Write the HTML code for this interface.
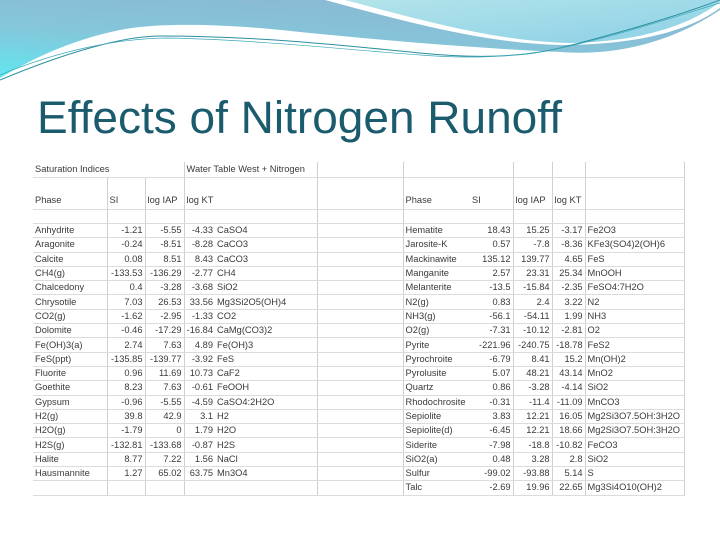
<!DOCTYPE html>
<html><head><meta charset="utf-8"><style>
html,body{margin:0;padding:0;background:#fff;}
body{width:720px;height:540px;position:relative;overflow:hidden;font-family:"Liberation Sans",sans-serif;}
table{position:absolute;left:33px;top:162px;border-collapse:collapse;table-layout:fixed;width:651px;font-size:9.3px;color:#3a3a3a;}
td{padding:0 2px;white-space:nowrap;overflow:hidden;border-bottom:1px solid #dcdcdc;height:13.3px;line-height:13px;}
td.r{text-align:right;}
td.b{border-right:1px solid #d0d0d0;}
tr.h1 td{height:15px;}
tr.h2 td{height:29px;vertical-align:bottom;padding-bottom:2px;}
tr.h3 td{height:13px;}
</style></head><body>
<svg width="720" height="160" style="position:absolute;left:0;top:0">
<defs>
<linearGradient id="g1" x1="0" y1="1" x2="0.6" y2="0"><stop offset="0" stop-color="#62e6f0"/><stop offset="0.5" stop-color="#85c6da"/><stop offset="1" stop-color="#8ab9d2"/></linearGradient>
<linearGradient id="g2" x1="0" y1="0" x2="1" y2="1"><stop offset="0" stop-color="#b3e4ea"/><stop offset="1" stop-color="#8cd0e6"/></linearGradient>
</defs>
<rect width="720" height="160" fill="#fff"/>
<path d="M0,0 H720 V10 C660,50 600,55 560,52 C470,48 380,40 300,32 C230,24 160,22 120,30 C70,40 30,60 0,78 Z" fill="url(#g1)"/>
<path d="M325,0 H720 V8 C690,30 640,45 560,45 C480,43 400,20 325,0 Z" fill="#fff"/>
<path d="M345,0 H720 V2 C690,25 640,42 570,43 C500,42 420,20 345,0 Z" fill="url(#g2)"/>
<path d="M0,80 C60,55 120,36 160,36 C260,36 350,46 420,53 C470,58 520,58 560,48 C620,33 680,15 720,0" fill="none" stroke="#2d8fa0" stroke-width="1"/>
<path d="M0,75 C60,50 120,38 170,38 C260,40 350,50 420,55 C470,59 520,58 570,46 C630,32 690,12 720,3" fill="none" stroke="#3aa8b8" stroke-width="0.7"/>
<text x="37" y="133" font-family="Liberation Sans, sans-serif" font-size="45" fill="#1a5b6e" textLength="525" lengthAdjust="spacingAndGlyphs">Effects of Nitrogen Runoff</text>
</svg>
<table>
<colgroup><col style="width:74px"><col style="width:38px"><col style="width:39px"><col style="width:31px"><col style="width:102px"><col style="width:86px"><col style="width:67px"><col style="width:43px"><col style="width:39px"><col style="width:33px"><col style="width:99px"></colgroup>
<tr class="h1"><td colspan="3" style="border-right:1px solid #d0d0d0">Saturation Indices</td><td colspan="2" class="b">Water Table West + Nitrogen</td><td class="b"></td><td></td><td class="b"></td><td class="b"></td><td class="b"></td><td class="b"></td></tr>
<tr class="h2"><td class="b">Phase</td><td class="b">SI</td><td class="b">log IAP</td><td>log KT</td><td class="b"></td><td class="b"></td><td>Phase</td><td class="b">SI</td><td class="b">log IAP</td><td class="b">log KT</td><td class="b"></td></tr>
<tr class="h3"><td class="b"></td><td class="b"></td><td class="b"></td><td></td><td class="b"></td><td class="b"></td><td></td><td class="b"></td><td class="b"></td><td class="b"></td><td class="b"></td></tr>
<tr><td class="b">Anhydrite</td><td class="r b">-1.21</td><td class="r b">-5.55</td><td class="r">-4.33</td><td class="b">CaSO4</td><td class="b"></td><td>Hematite</td><td class="r b">18.43</td><td class="r b">15.25</td><td class="r b">-3.17</td><td class="b">Fe2O3</td></tr>
<tr><td class="b">Aragonite</td><td class="r b">-0.24</td><td class="r b">-8.51</td><td class="r">-8.28</td><td class="b">CaCO3</td><td class="b"></td><td>Jarosite-K</td><td class="r b">0.57</td><td class="r b">-7.8</td><td class="r b">-8.36</td><td class="b">KFe3(SO4)2(OH)6</td></tr>
<tr><td class="b">Calcite</td><td class="r b">0.08</td><td class="r b">8.51</td><td class="r">8.43</td><td class="b">CaCO3</td><td class="b"></td><td>Mackinawite</td><td class="r b">135.12</td><td class="r b">139.77</td><td class="r b">4.65</td><td class="b">FeS</td></tr>
<tr><td class="b">CH4(g)</td><td class="r b">-133.53</td><td class="r b">-136.29</td><td class="r">-2.77</td><td class="b">CH4</td><td class="b"></td><td>Manganite</td><td class="r b">2.57</td><td class="r b">23.31</td><td class="r b">25.34</td><td class="b">MnOOH</td></tr>
<tr><td class="b">Chalcedony</td><td class="r b">0.4</td><td class="r b">-3.28</td><td class="r">-3.68</td><td class="b">SiO2</td><td class="b"></td><td>Melanterite</td><td class="r b">-13.5</td><td class="r b">-15.84</td><td class="r b">-2.35</td><td class="b">FeSO4:7H2O</td></tr>
<tr><td class="b">Chrysotile</td><td class="r b">7.03</td><td class="r b">26.53</td><td class="r">33.56</td><td class="b">Mg3Si2O5(OH)4</td><td class="b"></td><td>N2(g)</td><td class="r b">0.83</td><td class="r b">2.4</td><td class="r b">3.22</td><td class="b">N2</td></tr>
<tr><td class="b">CO2(g)</td><td class="r b">-1.62</td><td class="r b">-2.95</td><td class="r">-1.33</td><td class="b">CO2</td><td class="b"></td><td>NH3(g)</td><td class="r b">-56.1</td><td class="r b">-54.11</td><td class="r b">1.99</td><td class="b">NH3</td></tr>
<tr><td class="b">Dolomite</td><td class="r b">-0.46</td><td class="r b">-17.29</td><td class="r">-16.84</td><td class="b">CaMg(CO3)2</td><td class="b"></td><td>O2(g)</td><td class="r b">-7.31</td><td class="r b">-10.12</td><td class="r b">-2.81</td><td class="b">O2</td></tr>
<tr><td class="b">Fe(OH)3(a)</td><td class="r b">2.74</td><td class="r b">7.63</td><td class="r">4.89</td><td class="b">Fe(OH)3</td><td class="b"></td><td>Pyrite</td><td class="r b">-221.96</td><td class="r b">-240.75</td><td class="r b">-18.78</td><td class="b">FeS2</td></tr>
<tr><td class="b">FeS(ppt)</td><td class="r b">-135.85</td><td class="r b">-139.77</td><td class="r">-3.92</td><td class="b">FeS</td><td class="b"></td><td>Pyrochroite</td><td class="r b">-6.79</td><td class="r b">8.41</td><td class="r b">15.2</td><td class="b">Mn(OH)2</td></tr>
<tr><td class="b">Fluorite</td><td class="r b">0.96</td><td class="r b">11.69</td><td class="r">10.73</td><td class="b">CaF2</td><td class="b"></td><td>Pyrolusite</td><td class="r b">5.07</td><td class="r b">48.21</td><td class="r b">43.14</td><td class="b">MnO2</td></tr>
<tr><td class="b">Goethite</td><td class="r b">8.23</td><td class="r b">7.63</td><td class="r">-0.61</td><td class="b">FeOOH</td><td class="b"></td><td>Quartz</td><td class="r b">0.86</td><td class="r b">-3.28</td><td class="r b">-4.14</td><td class="b">SiO2</td></tr>
<tr><td class="b">Gypsum</td><td class="r b">-0.96</td><td class="r b">-5.55</td><td class="r">-4.59</td><td class="b">CaSO4:2H2O</td><td class="b"></td><td>Rhodochrosite</td><td class="r b">-0.31</td><td class="r b">-11.4</td><td class="r b">-11.09</td><td class="b">MnCO3</td></tr>
<tr><td class="b">H2(g)</td><td class="r b">39.8</td><td class="r b">42.9</td><td class="r">3.1</td><td class="b">H2</td><td class="b"></td><td>Sepiolite</td><td class="r b">3.83</td><td class="r b">12.21</td><td class="r b">16.05</td><td class="b">Mg2Si3O7.5OH:3H2O</td></tr>
<tr><td class="b">H2O(g)</td><td class="r b">-1.79</td><td class="r b">0</td><td class="r">1.79</td><td class="b">H2O</td><td class="b"></td><td>Sepiolite(d)</td><td class="r b">-6.45</td><td class="r b">12.21</td><td class="r b">18.66</td><td class="b">Mg2Si3O7.5OH:3H2O</td></tr>
<tr><td class="b">H2S(g)</td><td class="r b">-132.81</td><td class="r b">-133.68</td><td class="r">-0.87</td><td class="b">H2S</td><td class="b"></td><td>Siderite</td><td class="r b">-7.98</td><td class="r b">-18.8</td><td class="r b">-10.82</td><td class="b">FeCO3</td></tr>
<tr><td class="b">Halite</td><td class="r b">8.77</td><td class="r b">7.22</td><td class="r">1.56</td><td class="b">NaCl</td><td class="b"></td><td>SiO2(a)</td><td class="r b">0.48</td><td class="r b">3.28</td><td class="r b">2.8</td><td class="b">SiO2</td></tr>
<tr><td class="b">Hausmannite</td><td class="r b">1.27</td><td class="r b">65.02</td><td class="r">63.75</td><td class="b">Mn3O4</td><td class="b"></td><td>Sulfur</td><td class="r b">-99.02</td><td class="r b">-93.88</td><td class="r b">5.14</td><td class="b">S</td></tr>
<tr><td class="b"></td><td class="b"></td><td class="b"></td><td></td><td class="b"></td><td class="b"></td><td>Talc</td><td class="r b">-2.69</td><td class="r b">19.96</td><td class="r b">22.65</td><td class="b">Mg3Si4O10(OH)2</td></tr>
</table>
</body></html>
